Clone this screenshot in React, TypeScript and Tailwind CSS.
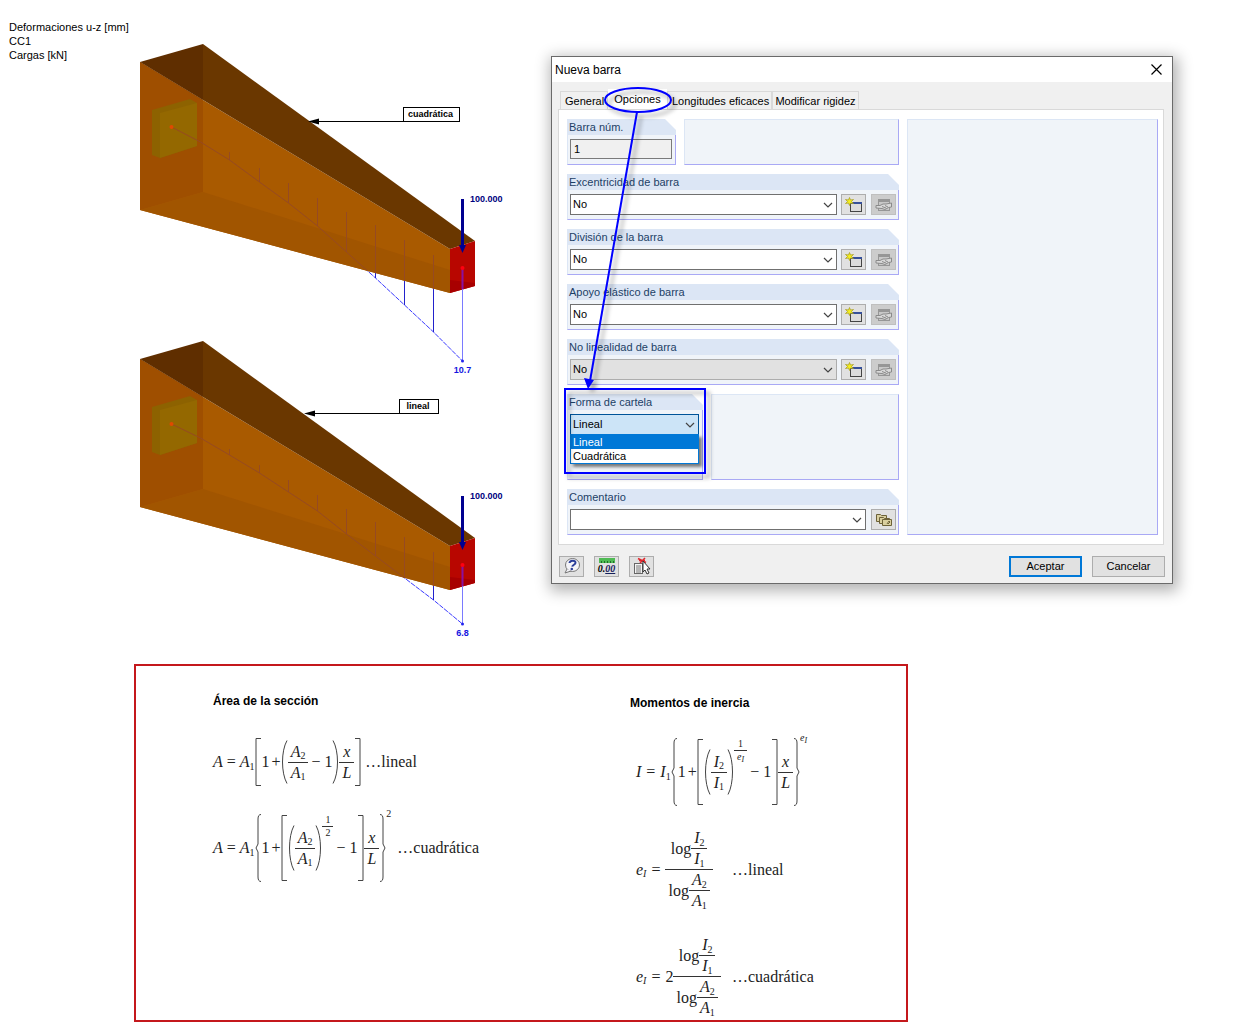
import type { ReactNode } from 'react';
import { useState } from 'react';
import clsx from 'clsx';

/* ---------- Beam drawings ---------- */

type BeamProps = {
  id: string;
  offset: number;
  curve: [number, number][];
  value: string;
  label: string;
  labelBox: { x: number; y: number; width: number; tip: number };
};

const HULL = '140,62 203,44 475,241 475,286 450,293 140,210';
const STATION_TOPS = [127, 140, 152, 168, 183, 198, 212, 225, 240, 255, 267];

function Beam({ id, offset, curve, value, label, labelBox }: BeamProps) {
  const points = curve.map(([x, y]) => `${x},${y}`).join(' ');
  const stations = curve.slice(2, -1).map(([x, y], i) => (
    <line key={x} x1={x} x2={x} y1={STATION_TOPS[i + 2]} y2={y} />
  ));
  const tip = curve[curve.length - 1];
  const base = labelBox.y + 14;

  return (
    <g transform={`translate(0 ${offset})`}>
      <clipPath id={id}>
        <polygon points={HULL} />
      </clipPath>

      <g stroke="#3a3aff" fill="none">
        <polyline points={points} strokeDasharray="5 1" />
        <g stroke="#2222cc">{stations}</g>
      </g>

      <polygon points="140,62 450,249 450,293 140,210" fill="#a95a00" />
      <polygon points="140,62 203,100 203,192 140,210" fill="#9f4f00" />
      <polygon points="140,210 203,192 450,270 450,293" fill="#a15500" />
      <polygon points="140,62 203,44 203,100" fill="#5f2e00" />
      <polygon points="203,44 475,241 450,249 203,100" fill="#6a3700" />
      <polygon points="450,249 475,241 475,286 450,293" fill="#b80600" />
      <polygon points="450,280 475,283 475,286 450,293" fill="#a80000" />

      <polygon points="152,110 190,99 197,103 197,146 160,158 152,155" fill="#8d6200" />
      <polygon points="160,113 197,103 197,146 160,158" fill="#946800" />

      <g clipPath={`url(#${id})`} stroke="#964a22" fill="none">
        <polyline points={points} />
        {stations}
      </g>
      <circle cx="171.5" cy="127" r="2" fill="#e04a00" />

      <line x1={tip[0]} x2={tip[0]} y1="267" y2={tip[1]} stroke="#7a7aff" />
      <line x1={tip[0]} x2={tip[0]} y1="268" y2="289" stroke="#8a10a0" strokeWidth="2" />
      <circle cx={tip[0]} cy="268" r="2" fill="#ff0010" />
      <circle cx={tip[0]} cy={tip[1]} r="1.5" fill="#2222ee" />
      <line x1="462.5" x2="462.5" y1="199" y2="247" stroke="#000090" strokeWidth="3" />
      <polygon points="459,245 466,245 462.5,253" fill="#000090" />

      <text x="470" y="202" fontSize="9" fontWeight="700" fill="#000080">
        100.000
      </text>
      <text x="462.5" y={tip[1] + 12} fontSize="9" fontWeight="700" fill="#1414e0" textAnchor="middle">
        {value}
      </text>

      <line x1={labelBox.tip + 6} x2={labelBox.x} y1={base} y2={base} stroke="#000" />
      <polygon
        points={`${labelBox.tip},${base} ${labelBox.tip + 11},${base - 3} ${labelBox.tip + 11},${base + 3}`}
      />
      <rect x={labelBox.x} y={labelBox.y} width={labelBox.width} height="14" fill="#fff" stroke="#000" />
      <text
        x={labelBox.x + labelBox.width / 2 - 1}
        y={labelBox.y + 9}
        fontSize="9"
        fontWeight="700"
        textAnchor="middle"
      >
        {label}
      </text>
    </g>
  );
}

function BeamModels() {
  return (
    <svg
      viewBox="134 40 380 602"
      className="mt-10 h-[602px] w-[380px] shrink-0 font-['Liberation_Sans',sans-serif]"
    >
      <Beam
        id="beam-quadratic"
        offset={0}
        value="10.7"
        label="cuadrática"
        labelBox={{ x: 403.5, y: 107.5, width: 56, tip: 308 }}
        curve={[
          [171.5, 127], [200.5, 142], [229.5, 160], [259.5, 182], [288.5, 203], [317.5, 226],
          [346.5, 252], [375.5, 278], [404.5, 305], [433.5, 332], [462.5, 361],
        ]}
      />
      <Beam
        id="beam-linear"
        offset={297}
        value="6.8"
        label="lineal"
        labelBox={{ x: 399.5, y: 102.5, width: 39, tip: 304 }}
        curve={[
          [171.5, 127], [200.5, 141], [229.5, 158], [259.5, 176], [288.5, 195], [317.5, 214],
          [346.5, 237], [375.5, 259], [404.5, 281], [433.5, 303], [462.5, 327],
        ]}
      />
    </svg>
  );
}

/* ---------- Icons ---------- */

function NewIcon() {
  return (
    <svg viewBox="0 0 18 16" className="h-4 w-[18px]">
      <rect x="5.5" y="5.5" width="11" height="9" fill="#dcdcdc" stroke="#444" />
      <rect x="6" y="5" width="11" height="2" fill="#35509a" />
      <path d="M4.5 .5L5.500 3l3-.5-2 2 2 2-3-.5-1 2.500-1-2.500-3 .5 2-2-2-2 3 .5z" fill="#f5ee20" stroke="#a39a20" strokeWidth=".7" />
    </svg>
  );
}

function EditIcon() {
  return (
    <svg viewBox="0 0 18 16" className="h-4 w-[18px]" fill="none">
      <rect x="3.500" y="2.500" width="11" height="11" fill="#c8c8c8" stroke="#969696" />
      <path d="M4 4h10" stroke="#969696" strokeWidth="2" />
      <path d="M1 8.500h4l3-1.500 3 0 5.500-1v4l-3 .5-3.500 2-3-1-6-.5z" fill="#d9d9d9" stroke="#8a8a8a" />
      <path d="M7 9.500l4 1.500M10 8.500l3 1.500" stroke="#8a8a8a" />
    </svg>
  );
}

function CommentsIcon() {
  return (
    <svg viewBox="0 0 18 16" className="h-4 w-[18px]" fill="#d9cf9f" stroke="#6d6238">
      <path d="M1.500 2.500h4l1 1h5v6h-10z" />
      <path d="M4.500 5.500h4l1 1h5v5h-10z" />
      <path d="M7.500 7.500h9v6h-9z" />
      <path d="M12 12l2-3 1 1-2 2" fill="#fff8c8" />
    </svg>
  );
}

function HelpIcon() {
  return (
    <svg viewBox="0 0 18 18" className="size-[18px]">
      <ellipse cx="9.500" cy="8" rx="7" ry="6.500" fill="#f4f4f8" stroke="#777" />
      <path d="M4 12l-2 4 6-2" fill="#f4f4f8" stroke="#777" />
      <path
        d="M6.500 6c.3-3 6-3.200 6-.3 0 2-3 2-3.300 4"
        fill="none"
        stroke="#2b3f9a"
        strokeWidth="2"
      />
      <circle cx="8.800" cy="12" r="1.300" fill="#2b3f9a" />
    </svg>
  );
}

function UnitsIcon() {
  return (
    <span className="flex w-full flex-col items-center">
      <svg viewBox="0 0 16 5" className="h-[5px] w-4">
        <rect width="16" height="5" fill="#4fbb54" />
        <path d="M2.500 5v-2M5.500 5v-2M8.500 5v-2M11.500 5v-2M14.500 5v-2" stroke="#1d6d28" />
      </svg>
      <span className="font-['Liberation_Serif',serif] text-[10px] leading-[11px] font-bold italic">
        0.<u className="text-[#16205c]">00</u>
      </span>
    </span>
  );
}

function PickIcon() {
  return (
    <svg viewBox="0 0 18 18" className="size-[18px]">
      <rect x="1.500" y="6.500" width="8" height="10" fill="#f4f4f4" stroke="#666" />
      <path d="M3 9h5M3 11h5M3 13h5M3 15h5" stroke="#777" />
      <path d="M5 1.500l8 4M12 1L7 6M6 3.500h6" stroke="#e0262c" strokeWidth="1.500" />
      <path d="M10 4v11l2-2 2 4 2-1-2-4h3z" fill="#fff" stroke="#333" />
    </svg>
  );
}

/* ---------- Dialog ---------- */

function IconButton({
  label,
  disabled,
  children,
}: {
  label: string;
  disabled?: boolean;
  children: ReactNode;
}) {
  return (
    <button
      type="button"
      aria-label={label}
      disabled={disabled}
      className={clsx(
        'flex h-[21px] w-[25px] shrink-0 items-center justify-center border',
        disabled ? 'border-[#bfbfbf] bg-[#cccccc]' : 'border-[#adadad] bg-[#e1e1e1]'
      )}
    >
      {children}
    </button>
  );
}

function Chevron() {
  return (
    <svg
      viewBox="0 0 10 6"
      className="pointer-events-none absolute top-1/2 right-1 h-1.5 w-2.5 -translate-y-1/2"
    >
      <path d="M1 1l4 4 4-4" fill="none" stroke="#444" strokeWidth="1.200" />
    </svg>
  );
}

function Group({
  title,
  htmlFor,
  className,
  children,
}: {
  title: string;
  htmlFor: string;
  className?: string;
  children: ReactNode;
}) {
  return (
    <section className={clsx('flex flex-col', className)}>
      <label
        htmlFor={htmlFor}
        className="block h-4 bg-[#dce6f5] pl-0.5 leading-4 text-[#1c3f66] [clip-path:polygon(0_0,calc(100%-11px)_0,100%_11px,100%_100%,0_100%)]"
      >
        {title}
      </label>
      <div className="flex-1 border-r border-b border-l border-r-[#a9a9f5] border-b-[#a9a9f5] border-l-[#dce6f5] bg-[#f0f4f9] px-0.5 pt-1">
        {children}
      </div>
    </section>
  );
}

function BlankPanel({ className }: { className?: string }) {
  return (
    <div
      className={clsx(
        'border border-t-[#dce6f5] border-r-[#a9a9f5] border-b-[#a9a9f5] border-l-[#dce6f5] bg-[#f0f4f9]',
        className
      )}
    />
  );
}

function ComboBox({ id, options, muted }: { id: string; options: string[]; muted?: boolean }) {
  return (
    <div className="relative flex-1">
      <select
        id={id}
        className={clsx(
          'block h-[21px] w-full appearance-none border px-0.5 text-black',
          muted ? 'border-[#adadad] bg-[#e1e1e1]' : 'border-[#707070] bg-white'
        )}
      >
        {options.map((option) => (
          <option key={option}>{option}</option>
        ))}
      </select>
      <Chevron />
    </div>
  );
}

const SELECT_GROUPS = [
  { id: 'eccentricity', title: 'Excentricidad de barra' },
  { id: 'division', title: 'División de la barra' },
  { id: 'foundation', title: 'Apoyo elástico de barra' },
  { id: 'nonlinearity', title: 'No linealidad de barra', muted: true },
];

function TaperShape() {
  const shapes = ['Lineal', 'Cuadrática'];
  const [selected, setSelected] = useState(shapes[0]);

  return (
    <div className="relative mr-px">
      <button
        id="taper"
        type="button"
        aria-haspopup="listbox"
        aria-expanded="true"
        className="block h-[21px] w-full border border-[#005499] bg-[#cce4f7] px-0.5 text-left"
      >
        {selected}
      </button>
      <Chevron />
      <ul
        role="listbox"
        aria-label="Forma de cartela"
        className="absolute top-5 right-0 left-0 z-10 border border-[#0078d7] bg-white shadow-[3px_3px_3px_rgba(0,0,0,0.5)]"
      >
        {shapes.map((shape) => (
          <li
            key={shape}
            role="option"
            aria-selected={shape === selected}
            onClick={() => setSelected(shape)}
            className={clsx(
              'h-[14px] px-0.5 leading-[14px]',
              shape === selected && 'bg-[#0078d7] text-white'
            )}
          >
            {shape}
          </li>
        ))}
      </ul>
    </div>
  );
}

// Blue marks that lead from the active tab to the taper group
function Callout() {
  return (
    <svg
      viewBox="0 0 180 440"
      className="pointer-events-none absolute top-0 left-0 z-20 h-[440px] w-[180px] drop-shadow-[4px_4px_2px_rgba(0,0,0,0.35)]"
      fill="none"
      stroke="#0000ff"
      strokeWidth="2"
    >
      <ellipse cx="86" cy="43" rx="33" ry="12" />
      <line x1="85" y1="55" x2="38" y2="324" />
      <polygon points="32,321 42,323 36,332" fill="#0000ff" stroke="none" />
      <rect x="13" y="332" width="140" height="84" />
    </svg>
  );
}

const TAB = 'h-[18px] border border-b-0 border-[#d9d9d9] bg-[#f0f0f0] leading-[18px]';

function MemberDialog() {
  return (
    <div
      role="dialog"
      aria-label="Nueva barra"
      className="relative mt-14 mr-[70px] ml-[37px] max-w-[640px] min-w-[560px] flex-1 border border-[#6a6a6a] bg-[#f0f0f0] text-[11px] shadow-[2px_4px_14px_3px_rgba(0,0,0,0.3)]"
    >
      <header className="flex h-[25px] items-center justify-between bg-white pr-2.5 pl-[3px]">
        <h1 className="text-xs">Nueva barra</h1>
        <button type="button" aria-label="Cerrar">
          <svg viewBox="0 0 11 11" className="size-[11px]">
            <path d="M0.500 0.500l10 10M10.500 0.500l-10 10" stroke="#000" strokeWidth="1.200" />
          </svg>
        </button>
      </header>

      <div className="pt-[7px] pr-2 pl-1.5">
        <div role="tablist" className="flex items-end pl-0.5 whitespace-nowrap">
          <button type="button" role="tab" className={clsx(TAB, 'w-12 pl-1 text-left')}>
            General
          </button>
          <button
            type="button"
            role="tab"
            aria-selected="true"
            className="h-5 w-[59px] bg-white text-center leading-5"
          >
            Opciones
          </button>
          <button type="button" role="tab" className={clsx(TAB, 'w-[105px] pl-1 text-left')}>
            Longitudes eficaces
          </button>
          <button type="button" role="tab" className={clsx(TAB, 'w-[87px] text-center')}>
            Modificar rigidez
          </button>
        </div>

        <div className="flex gap-2 border border-[#d9d9d9] bg-white py-[9px] pr-[5px] pl-2">
          <div className="flex w-[332px] flex-col gap-[9px]">
            <div className="flex gap-2">
              <Group title="Barra núm." htmlFor="member-no" className="h-[46px] w-[109px]">
                <input
                  id="member-no"
                  defaultValue="1"
                  readOnly
                  className="block h-5 w-[102px] border border-[#7a7a7a] bg-[#f0f0f0] px-[3px]"
                />
              </Group>
              <BlankPanel className="flex-1" />
            </div>

            {SELECT_GROUPS.map(({ id, title, muted }) => (
              <Group key={id} title={title} htmlFor={id} className="h-[46px]">
                <div className="flex">
                  <ComboBox id={id} options={['No']} muted={muted} />
                  <div className="ml-1 flex gap-[5px]">
                    <IconButton label="Nuevo">
                      <NewIcon />
                    </IconButton>
                    <IconButton label="Editar" disabled>
                      <EditIcon />
                    </IconButton>
                  </div>
                </div>
              </Group>
            ))}

            <div className="flex gap-2">
              <Group title="Forma de cartela" htmlFor="taper" className="h-[86px] w-[136px]">
                <TaperShape />
              </Group>
              <BlankPanel className="flex-1" />
            </div>

            <Group title="Comentario" htmlFor="comment" className="h-[46px]">
              <div className="flex gap-[5px]">
                <ComboBox id="comment" options={['']} />
                <IconButton label="Comentarios">
                  <CommentsIcon />
                </IconButton>
              </div>
            </Group>
          </div>
          <BlankPanel className="flex-1" />
        </div>
      </div>

      <footer className="flex h-[38px] items-center justify-between px-[7px] pt-1">
        <div className="flex gap-2.5">
          <IconButton label="Ayuda">
            <HelpIcon />
          </IconButton>
          <IconButton label="Unidades">
            <UnitsIcon />
          </IconButton>
          <IconButton label="Seleccionar">
            <PickIcon />
          </IconButton>
        </div>
        <div className="flex gap-2.5">
          <button type="button" className="h-[21px] w-[73px] border-2 border-[#0078d7] bg-[#e1e1e1]">
            Aceptar
          </button>
          <button type="button" className="h-[21px] w-[73px] border border-[#adadad] bg-[#e1e1e1]">
            Cancelar
          </button>
        </div>
      </footer>

      <Callout />
    </div>
  );
}

/* ---------- Formulas ---------- */

const DELIMITERS = {
  '[': (h: number) => `M6 .5H1V${h - 0.5}H6`,
  ']': (h: number) => `M1 .5H6V${h - 0.5}H1`,
  '(': (h: number) => `M6 .5C0 ${h * 0.25} 0 ${h * 0.75} 6 ${h - 0.5}`,
  ')': (h: number) => `M1 .5C7 ${h * 0.25} 7 ${h * 0.75} 1 ${h - 0.5}`,
  '{': (h: number) => `M6 .5Q3 .5 3 5V${h / 2 - 4}L1 ${h / 2}L3 ${h / 2 + 4}V${h - 5}Q3 ${h - 0.5} 6 ${h - 0.5}`,
  '}': (h: number) => `M1 .5Q4 .5 4 5V${h / 2 - 4}L6 ${h / 2}L4 ${h / 2 + 4}V${h - 5}Q4 ${h - 0.5} 1 ${h - 0.5}`,
};

function Delim({ kind, h }: { kind: keyof typeof DELIMITERS; h: number }) {
  return (
    <svg width="7" height={h} className="shrink-0">
      <path d={DELIMITERS[kind](h)} fill="none" stroke="#444" />
    </svg>
  );
}

function Sym({ name, index }: { name: string; index?: string }) {
  return (
    <span>
      <i>{name}</i>
      {index && <sub className={clsx('text-[10px]', index === 'I' && 'italic')}>{index}</sub>}
    </span>
  );
}

function Frac({ top, bottom }: { top: ReactNode; bottom: ReactNode }) {
  return (
    <span className="flex flex-col items-stretch text-center">
      <span className="flex justify-center px-[3px]">{top}</span>
      <span className="h-px bg-[#333]" />
      <span className="flex justify-center px-[3px]">{bottom}</span>
    </span>
  );
}

function Exponent({ top, bottom }: { top: ReactNode; bottom: ReactNode }) {
  return (
    <span className="self-start text-[10px] leading-3">
      <Frac top={top} bottom={bottom} />
    </span>
  );
}

function Row({ className, children }: { className?: string; children: ReactNode }) {
  return (
    <div className={clsx('flex items-center leading-5 whitespace-nowrap', className)}>{children}</div>
  );
}

function OnePlus() {
  return (
    <span className="flex gap-0.5">
      <span>1</span>+
    </span>
  );
}

function MinusOne() {
  return (
    <span className="flex gap-1 pl-[3px]">
      −<span>1</span>
    </span>
  );
}

function LogRatio({ name }: { name: string }) {
  return (
    <span className="flex items-center">
      log
      <Frac top={<Sym name={name} index="2" />} bottom={<Sym name={name} index="1" />} />
    </span>
  );
}

const EXP_I = (
  <i>
    e<sub className="text-[8px]">I</sub>
  </i>
);

function Formulas() {
  return (
    <section className="mt-[22px] mr-5 ml-[134px] flex max-w-[774px] border-2 border-[#c4181c] bg-white pb-0.5 font-['Liberation_Serif',serif] text-base text-[#222]">
      <div className="w-[417px] shrink-0 pt-[27px] pl-[77px]">
        <h2 className="font-['Liberation_Sans',sans-serif] text-xs leading-4 font-bold text-black">
          Área de la sección
        </h2>
        <Row className="mt-[29px] h-12">
          <span className="flex gap-1">
            <Sym name="A" />=<Sym name="A" index="1" />
          </span>
          <Delim kind="[" h={48} />
          <OnePlus />
          <Delim kind="(" h={44} />
          <Frac top={<Sym name="A" index="2" />} bottom={<Sym name="A" index="1" />} />
          <MinusOne />
          <Delim kind=")" h={44} />
          <Frac top={<Sym name="x" />} bottom={<Sym name="L" />} />
          <Delim kind="]" h={48} />
          <span className="ml-1">…lineal</span>
        </Row>
        <Row className="mt-7 h-[68px]">
          <span className="flex gap-1">
            <Sym name="A" />=<Sym name="A" index="1" />
          </span>
          <Delim kind="{" h={68} />
          <OnePlus />
          <Delim kind="[" h={66} />
          <Delim kind="(" h={46} />
          <Frac top={<Sym name="A" index="2" />} bottom={<Sym name="A" index="1" />} />
          <Delim kind=")" h={46} />
          <Exponent top="1" bottom="2" />
          <MinusOne />
          <Delim kind="]" h={66} />
          <Frac top={<Sym name="x" />} bottom={<Sym name="L" />} />
          <Delim kind="}" h={68} />
          <span className="-mt-1.5 self-start text-[10px] leading-3">2</span>
          <span className="ml-1.5">…cuadrática</span>
        </Row>
      </div>

      <div className="flex-1 pt-[29px] pl-[77px]">
        <h2 className="font-['Liberation_Sans',sans-serif] text-xs leading-4 font-bold text-black">
          Momentos de inercia
        </h2>
        <Row className="mt-[27px] h-[68px] pl-1.5">
          <span className="flex gap-[5px]">
            <Sym name="I" />=<Sym name="I" index="1" />
          </span>
          <Delim kind="{" h={68} />
          <OnePlus />
          <Delim kind="[" h={66} />
          <Delim kind="(" h={46} />
          <Frac top={<Sym name="I" index="2" />} bottom={<Sym name="I" index="1" />} />
          <Delim kind=")" h={46} />
          <Exponent top="1" bottom={EXP_I} />
          <MinusOne />
          <Delim kind="]" h={66} />
          <Frac top={<Sym name="x" />} bottom={<Sym name="L" />} />
          <Delim kind="}" h={68} />
          <span className="-mt-1.5 self-start text-[10px] leading-3">{EXP_I}</span>
        </Row>
        <Row className="mt-[22px] pl-1.5">
          <span className="flex w-24 items-center gap-[5px]">
            <Sym name="e" index="I" />=
            <Frac top={<LogRatio name="I" />} bottom={<LogRatio name="A" />} />
          </span>
          …lineal
        </Row>
        <Row className="mt-6 pl-1.5">
          <span className="flex w-24 items-center gap-[5px]">
            <Sym name="e" index="I" />=
            <span className="flex items-center">
              2
              <Frac top={<LogRatio name="I" />} bottom={<LogRatio name="A" />} />
            </span>
          </span>
          …cuadrática
        </Row>
      </div>
    </section>
  );
}

export default function App() {
  return (
    <main className="min-h-screen bg-white font-['Liberation_Sans',sans-serif] text-black">
      <div className="flex items-start">
        <div className="w-[134px] shrink-0 pt-5 pl-[9px] text-[11px] leading-[14px] whitespace-nowrap">
          <p>Deformaciones u-z [mm]</p>
          <p>CC1</p>
          <p>Cargas [kN]</p>
        </div>
        <BeamModels />
        <MemberDialog />
      </div>
      <Formulas />
    </main>
  );
}
